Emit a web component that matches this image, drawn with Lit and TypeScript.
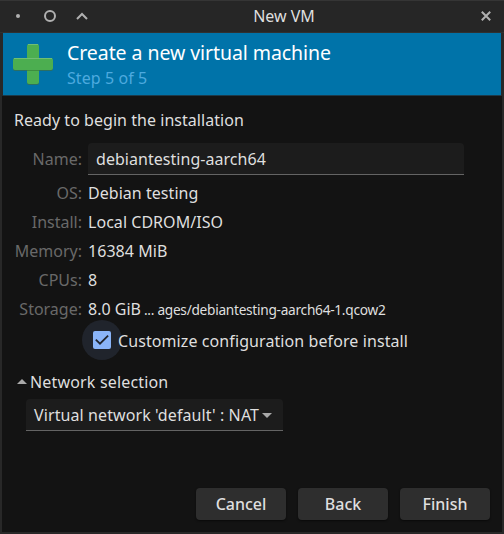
import { LitElement, html, css } from "lit";
import { customElement } from "lit/decorators.js";

const details = [
  ["OS:", "Debian testing"],
  ["Install:", "Local CDROM/ISO"],
  ["Memory:", "16384 MiB"],
  ["CPUs:", "8"],
];

@customElement("app-root")
export class AppRoot extends LitElement {
  static styles = css`
    :host {
      display: flex;
      flex-direction: column;
      box-sizing: border-box;
      width: 504px;
      height: 534px;
      padding: 0 2px 2px;
      overflow: hidden;
      background: #282828;
      color: #dfdfdf;
      font: 16px/23px "Noto Sans", sans-serif;
      white-space: nowrap;
    }
    svg { display: block; flex: none; }
    .titlebar {
      display: grid;
      grid-template-columns: 120px 1fr 120px;
      align-items: center;
      height: 33px;
      margin: 0 -2px;
      box-sizing: border-box;
      border-top: 1px solid #353535;
      border-bottom: 1px solid #303030;
      background: #262626;
    }
    .caption { text-align: center; padding-left: 64px; }
    .titlebar .close { justify-self: end; }
    .banner {
      display: flex;
      box-sizing: border-box;
      height: 63px;
      margin: 0 1px;
      padding: 10px 0 0 9px;
      gap: 12px;
      background: #0073a9;
      border-bottom: 1px solid #1c3a4a;
    }
    .title { font-size: 19.5px; line-height: 20px; letter-spacing: -0.07px; color: #fff; }
    .step { margin-top: 3px; line-height: 24px; color: #4daadf; letter-spacing: 0.08px; }
    .body {
      flex: 1;
      display: flex;
      flex-direction: column;
      background: #131313;
      padding: 13px 12px 12px;
    }
    .lead { letter-spacing: 0.04px; }
    .summary {
      display: grid;
      grid-template-columns: 68px 376px;
      column-gap: 6px;
      row-gap: 6px;
      margin-top: 11px;
      align-items: center;
    }
    .label { text-align: right; color: #696969; }
    .entry {
      box-sizing: border-box;
      height: 32px;
      margin-bottom: 1px;
      padding: 5px 8px 3px;
      background: #1c1c1c;
      border-bottom: 1px solid #646464;
      border-radius: 4px 4px 0 0;
      letter-spacing: 0.04px;
    }
    .value { letter-spacing: 0.04px; }
    .storage { display: flex; gap: 3px; }
    .path { font-size: 13.7px; letter-spacing: -0.28px; white-space: pre; }
    .check { display: flex; height: 40px; align-items: center; margin: -1px 0 0 68px; letter-spacing: 0.09px; }
    .check-text { padding-top: 2px; }
    .halo {
      width: 40px;
      height: 40px;
      border-radius: 50%;
      background: #20242c;
      display: grid;
      place-items: center;
      margin-right: -4px;
    }
    .network { display: flex; align-items: center; gap: 3px; margin: 11px 0 0 3px; letter-spacing: 0.17px; }
    .combo {
      display: flex;
      align-items: center;
      justify-content: space-between;
      box-sizing: border-box;
      width: 257px;
      height: 32px;
      margin: 5px 0 0 12px;
      padding: 1px 11px 0 8px;
      background: #1c1c1c;
      border-bottom: 1px solid #646464;
      border-radius: 4px 4px 0 0;
      letter-spacing: 0.1px;
    }
    .actions { display: flex; justify-content: flex-end; gap: 12px; margin-top: auto; }
    .button {
      width: 90px;
      height: 32px;
      border: 0;
      padding: 0;
      border-radius: 4px;
      background: #2e2e2e;
      color: #dfdfdf;
      font: 500 16px/32px "Noto Sans", sans-serif;
      box-shadow: 0 1px 2px #0008;
    }
  `;

  render() {
    return html`
      <div class="titlebar">
        <svg width="100" height="31" viewBox="0 0 100 31">
          <circle cx="18" cy="15" r="2" fill="#b0b0b0" />
          <circle cx="50" cy="15" r="5" fill="none" stroke="#b0b0b0" stroke-width="2" />
          <path d="M77 18l5-5 5 5" fill="none" stroke="#b0b0b0" stroke-width="2" />
        </svg>
        <span class="caption">New VM</span>
        <svg class="close" width="36" height="31" viewBox="0 0 36 31">
          <path d="M13.8 10.8l8.4 8.4M22.2 10.8l-8.4 8.4" stroke="#b0b0b0" stroke-width="2" />
        </svg>
      </div>
      <div class="banner">
        <svg width="43" height="44" viewBox="0 0 43 44">
          <rect x="15" y="2" width="12" height="40" rx="2" fill="#2b6f63" />
          <rect x="1" y="16" width="40" height="12" rx="2" fill="#2b6f63" />
          <rect x="15" y="1" width="12" height="40" rx="2" fill="#4cae50" />
          <path d="M16 1h10v1H16z" fill="#70be73" />
          <path d="M15 27h12v1H15z" fill="#3d8c40" />
          <rect x="1" y="15" width="40" height="12" rx="2" fill="#4cae50" />
          <path d="M2 15h38v1H2z" fill="#70be73" />
        </svg>
        <div>
          <div class="title">Create a new virtual machine</div>
          <div class="step">Step 5 of 5</div>
        </div>
      </div>
      <div class="body">
        <div class="lead">Ready to begin the installation</div>
        <div class="summary">
          <span class="label">Name:</span>
          <div class="entry">debiantesting-aarch64</div>
          ${details.map(([k, v]) => html`<span class="label">${k}</span><span class="value">${v}</span>`)}
          <span class="label">Storage:</span>
          <div class="storage"><span>8.0 GiB</span><span class="path">... ages/debiantesting-aarch64-1.qcow2</span></div>
        </div>
        <div class="check">
          <div class="halo">
            <svg width="18" height="18" viewBox="0 0 18 18">
              <rect width="18" height="18" rx="2" fill="#8ab4f8" />
              <path d="M2.8 8.6l4.2 4.1 8.1-8" fill="none" stroke="#20242c" stroke-width="1.8" />
            </svg>
          </div>
          <span class="check-text">Customize configuration before install</span>
        </div>
        <div class="network">
          <svg width="10" height="8" viewBox="0 0 10 8"><path d="M0 5l5-5 5 5z" fill="#a9a9a9" /></svg>
          <span>Network selection</span>
        </div>
        <div class="combo">
          <span>Virtual network 'default' : NAT</span>
          <svg width="10" height="5" viewBox="0 0 10 5"><path d="M0 0h10L5 5z" fill="#a9a9a9" /></svg>
        </div>
        <div class="actions">
          ${["Cancel", "Back", "Finish"].map((t) => html`<button class="button">${t}</button>`)}
        </div>
      </div>
    `;
  }
}
